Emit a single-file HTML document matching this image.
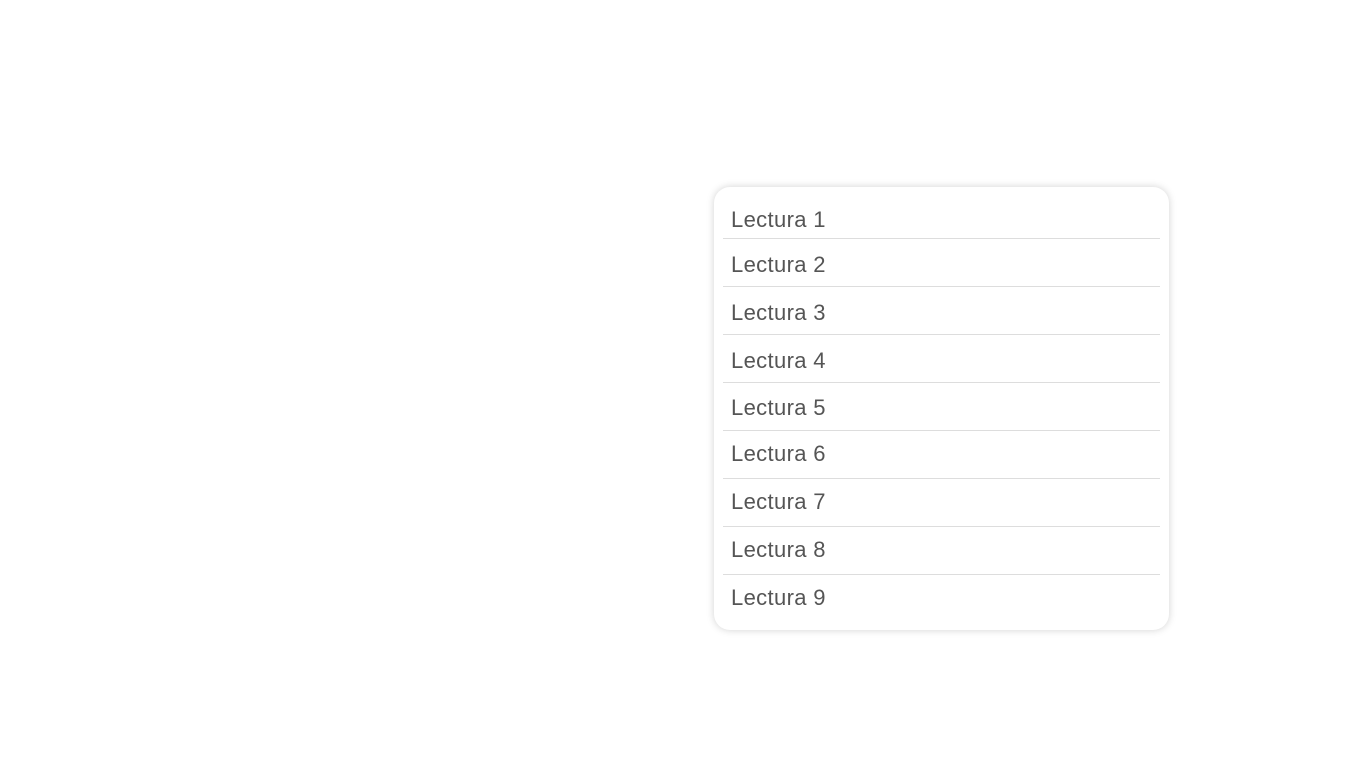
<!DOCTYPE html>
<html><head><style>
body{margin:0;width:1366px;height:768px;background:#fff;position:relative;overflow:hidden;font-family:"Liberation Sans",sans-serif}
.card{position:absolute;left:714px;top:187px;width:455px;height:443px;border-radius:16px;background:#fff;box-shadow:0 0 8px rgba(0,0,0,0.18)}
.t{position:absolute;left:731px;font-size:22px;letter-spacing:0.35px;color:#555;line-height:24px}
.l{position:absolute;left:723px;width:437px;height:1px;background:#ddd}
</style></head><body>
<div class="card"></div>
<div class="t" style="top:208px">Lectura 1</div>
<div class="l" style="top:238px"></div>
<div class="t" style="top:253px">Lectura 2</div>
<div class="l" style="top:286px"></div>
<div class="t" style="top:301px">Lectura 3</div>
<div class="l" style="top:334px"></div>
<div class="t" style="top:349px">Lectura 4</div>
<div class="l" style="top:382px"></div>
<div class="t" style="top:396px">Lectura 5</div>
<div class="l" style="top:430px"></div>
<div class="t" style="top:442px">Lectura 6</div>
<div class="l" style="top:478px"></div>
<div class="t" style="top:490px">Lectura 7</div>
<div class="l" style="top:526px"></div>
<div class="t" style="top:538px">Lectura 8</div>
<div class="l" style="top:574px"></div>
<div class="t" style="top:586px">Lectura 9</div>
</body></html>
